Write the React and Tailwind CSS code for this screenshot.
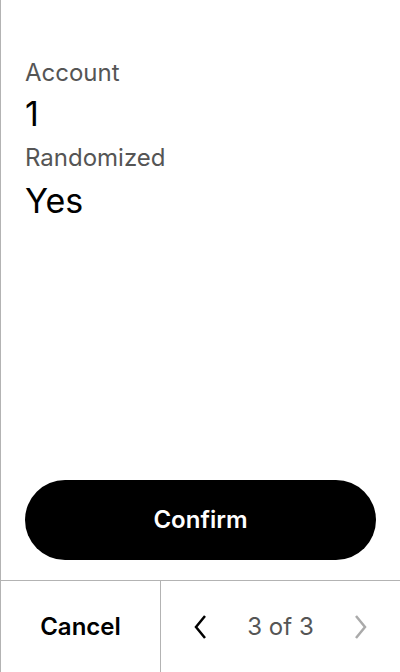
import React from 'react';

const App = () => {
  return (
    <div className="h-[672px] w-[400px] bg-white border-l border-[#b3b3b3] flex flex-col" style={{ fontFamily: 'Inter, "Noto Sans", sans-serif' }}>
      <div className="flex-1 flex flex-col px-6 pt-[57px]">
        <div className="text-[24px] leading-[32px] text-[#555555]">Account</div>
        <div className="text-[34px] leading-[56px] text-black -mt-[3px]">1</div>
        <div className="text-[24px] leading-[32px] text-[#555555]">Randomized</div>
        <div className="text-[34px] leading-[56px] text-black -mt-[1px]">Yes</div>
        <div className="flex-1" />
        <button className="h-[80px] w-full rounded-full bg-black text-white text-[24px] font-semibold mb-[20px]">
          Confirm
        </button>
      </div>
      <div className="h-[92px] border-t border-[#b3b3b3] flex">
        <button className="w-[160px] border-r border-[#b3b3b3] text-[24px] font-semibold text-black">
          Cancel
        </button>
        <div className="flex-1 flex items-center justify-between pl-[30px] pr-[30px]">
          <svg width="20" height="28" viewBox="0 0 20 28" fill="none" stroke="#000" strokeWidth="2.5">
            <path d="M14 3 L5 14 L14 25" />
          </svg>
          <span className="text-[24px] text-[#555555]">3 of 3</span>
          <svg width="20" height="28" viewBox="0 0 20 28" fill="none" stroke="#aaaaaa" strokeWidth="2.5">
            <path d="M6 3 L15 14 L6 25" />
          </svg>
        </div>
      </div>
    </div>
  );
};

export default App;
